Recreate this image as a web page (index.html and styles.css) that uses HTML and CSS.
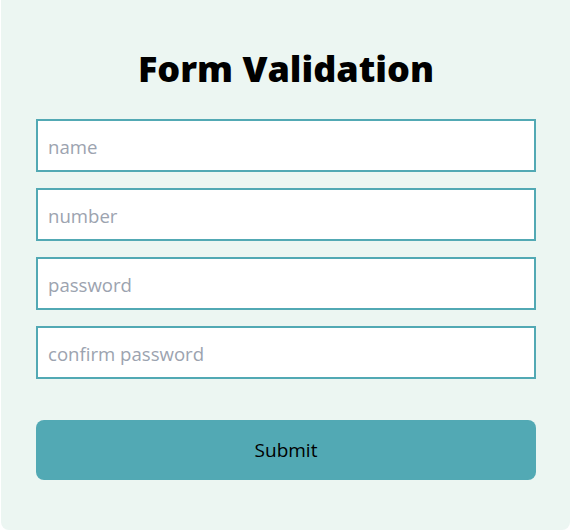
FILE: index.html
```html
<!DOCTYPE html>
<html>
<head>
<meta charset="utf-8">
<link rel="stylesheet" href="styles.css">
</head>
<body>
<div class="card">
  <h1 class="title">Form Validation</h1>
  <form class="form">
    <input class="field" type="text" placeholder="name">
    <input class="field" type="text" placeholder="number">
    <input class="field" type="password" placeholder="password">
    <input class="field" type="password" placeholder="confirm password">
    <button class="submit" type="button">Submit</button>
  </form>
</div>
</body>
</html>
```
FILE: styles.css
```css
html, body {
  margin: 0;
  padding: 0;
  background: #ffffff;
}
body {
  font-family: "Open Sans", "Noto Sans", sans-serif;
  overflow: hidden;
}
.card {
  box-sizing: border-box;
  width: 569px;
  height: 538px;
  margin: -8px 0 0 1px;
  background: #ecf6f2;
  border-radius: 8px;
  padding: 55px 34px 0 35px;
}
.title {
  margin: 0;
  height: 72px;
  text-align: center;
  font-family: "Open Sans", "Noto Sans", sans-serif;
  font-weight: 800;
  font-size: 36px;
  line-height: 44px;
  color: #000;
}
.form {
  display: flex;
  flex-direction: column;
  gap: 16px;
}
.field {
  box-sizing: border-box;
  width: 500px;
  height: 53px;
  border: 2px solid #52a9b4;
  border-radius: 0;
  background: #fff;
  padding: 1px 10px 0;
  font-family: "Open Sans", "Noto Sans", sans-serif;
  font-size: 18.6px;
  color: #333;
  outline: none;
}
.field::placeholder {
  color: #9ca3af;
}
.submit {
  margin-top: 25px;
  width: 500px;
  height: 60px;
  border: none;
  border-radius: 8px;
  background: #52a9b4;
  color: #000;
  font-family: "Open Sans", "Noto Sans", sans-serif;
  font-size: 19px;
}
```
